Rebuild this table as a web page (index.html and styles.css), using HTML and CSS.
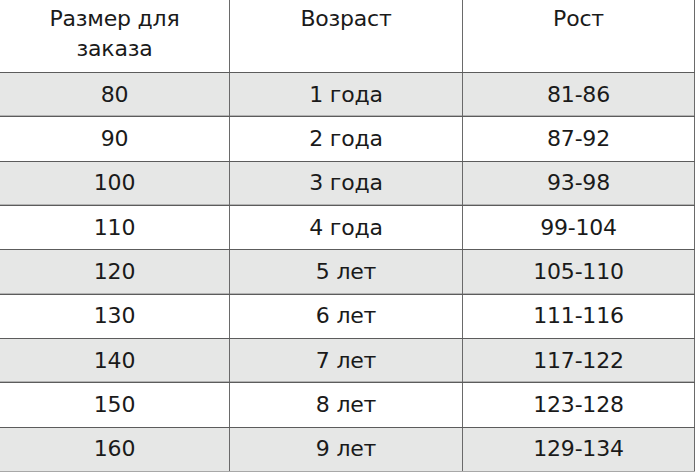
FILE: index.html
```
<!DOCTYPE html>
<html lang="ru">
<head>
<meta charset="utf-8">
<link rel="stylesheet" href="styles.css">
</head>
<body>
<div class="table">
  <div class="row head">
    <div class="cell">Размер для<br>заказа</div>
    <div class="cell">Возраст</div>
    <div class="cell">Рост</div>
  </div>
  <div class="row shade"><div class="cell">80</div><div class="cell">1 года</div><div class="cell">81-86</div></div>
  <div class="row"><div class="cell">90</div><div class="cell">2 года</div><div class="cell">87-92</div></div>
  <div class="row shade"><div class="cell">100</div><div class="cell">3 года</div><div class="cell">93-98</div></div>
  <div class="row"><div class="cell">110</div><div class="cell">4 года</div><div class="cell">99-104</div></div>
  <div class="row shade"><div class="cell">120</div><div class="cell">5 лет</div><div class="cell">105-110</div></div>
  <div class="row"><div class="cell">130</div><div class="cell">6 лет</div><div class="cell">111-116</div></div>
  <div class="row shade"><div class="cell">140</div><div class="cell">7 лет</div><div class="cell">117-122</div></div>
  <div class="row"><div class="cell">150</div><div class="cell">8 лет</div><div class="cell">123-128</div></div>
  <div class="row shade last"><div class="cell">160</div><div class="cell">9 лет</div><div class="cell">129-134</div></div>
</div>
</body>
</html>
```
FILE: styles.css
```
html, body {
  margin: 0;
  padding: 0;
  background: #ffffff;
}
.table {
  width: 695px;
  font-family: "DejaVu Sans", "Open Sans", sans-serif;
  font-size: 22px;
  letter-spacing: -0.2px;
  color: #1a1a1a;
}
.row {
  display: grid;
  grid-template-columns: 230px 233px 232px;
  box-sizing: border-box;
  height: 44.33px;
  border-top: 1px solid #5c5c5c;
}
.row.head {
  height: 72px;
  border-top: none;
}
.row.shade {
  background: #e6e7e6;
  box-shadow: inset 0 -1px 0 #b4b4b4;
}
.row.last {
  height: 45px;
  border-bottom: 1px solid #a8a8a8;
  box-shadow: none;
}
.cell {
  border-right: 1px solid #6a6a6a;
  text-align: center;
  display: flex;
  align-items: center;
  justify-content: center;
  line-height: 30px;
}
.head .cell {
  align-items: flex-start;
  padding-top: 4px;
}
```
